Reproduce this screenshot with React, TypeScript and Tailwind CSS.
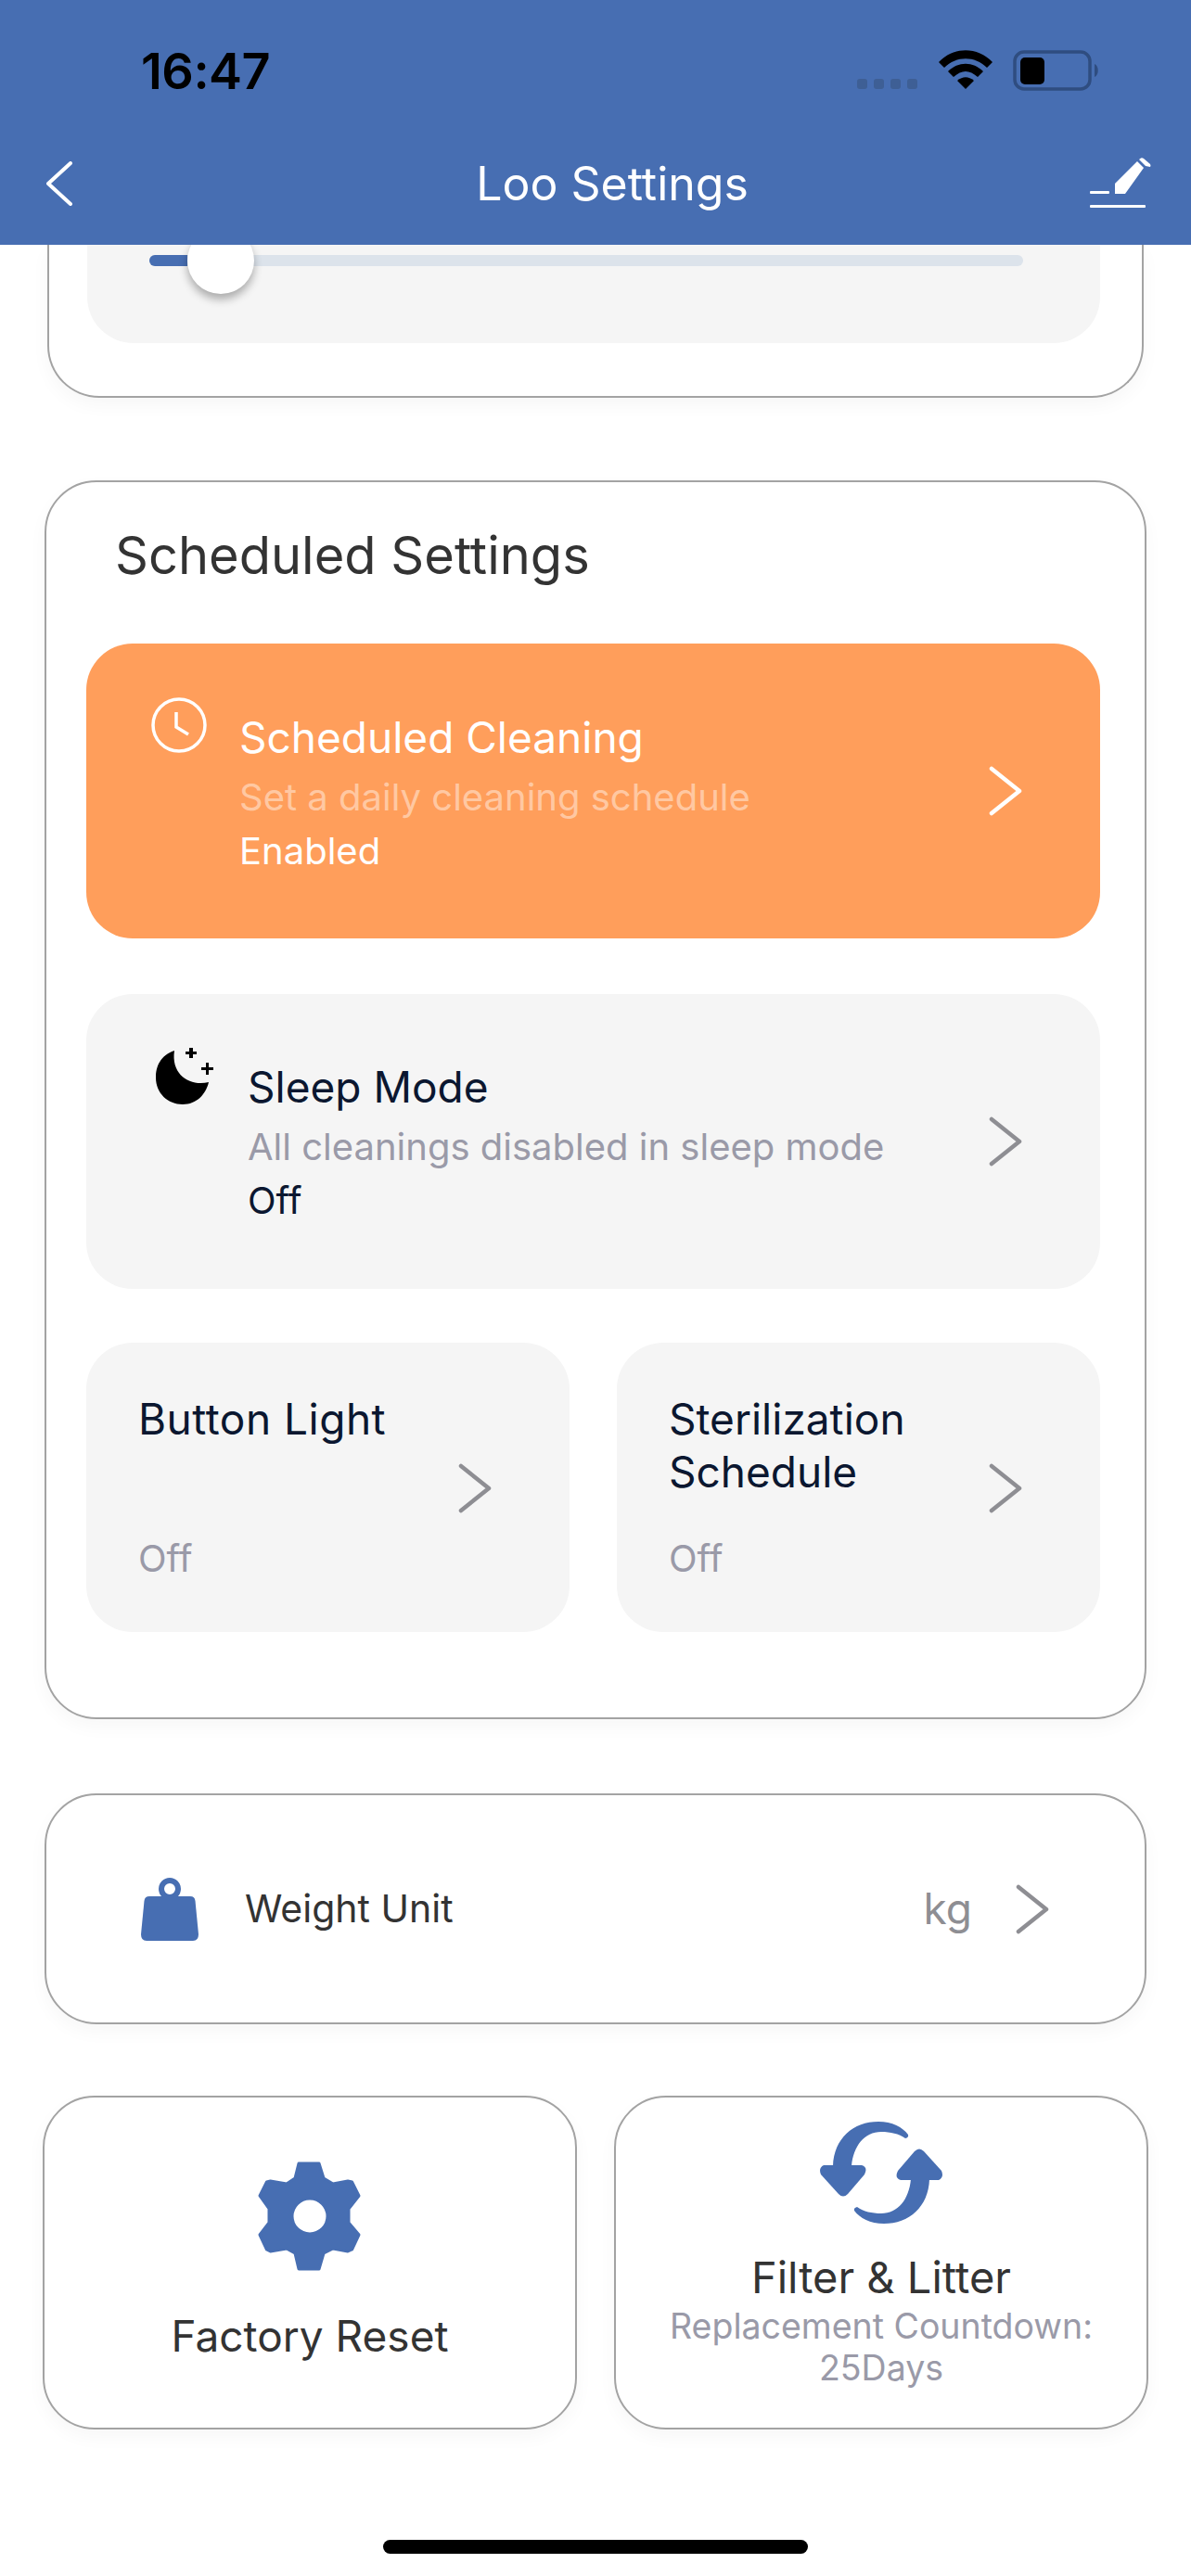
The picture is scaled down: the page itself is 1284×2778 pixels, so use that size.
const Chevron = ({ className }: { className: string }) => (
  <svg viewBox="0 0 36 54" className={className} fill="none" stroke="currentColor" strokeWidth="4.5" strokeLinecap="round" strokeLinejoin="round">
    <path d="M3 3 L33 27 L3 51" />
  </svg>
);

const Wifi = () => (
  <svg viewBox="0 0 58 42" className="w-[58px] h-[42px]" fill="#000">
    <path d="M0 13 C16 -4 42 -4 58 13 L52 19 C39 6 19 6 6 19 Z" />
    <path d="M10 23 C21 12 37 12 48 23 L42 29 C33 21 25 21 16 29 Z" />
    <path d="M20 33 C26 28 32 28 38 33 L29 42 Z" />
  </svg>
);

const Battery = () => (
  <svg viewBox="0 0 94 44" className="w-[94px] h-[44px]">
    <rect x="2" y="2" width="81" height="40" rx="10" fill="none" stroke="#2f4d80" strokeWidth="3.5" />
    <rect x="8" y="8" width="26" height="29" rx="5" fill="#000" />
    <path d="M88 15 C93 17 93 27 88 29 Z" fill="#2f4d80" />
  </svg>
);

const Pencil = () => (
  <svg viewBox="0 0 66 54" className="w-[66px] h-[54px]" fill="#fff">
    <rect x="0" y="36" width="21" height="3" rx="1" />
    <rect x="0" y="51" width="60" height="3" rx="1" />
    <path d="M27 39 L27 28 L51 4 L58 11 L38 39 Z" />
    <path d="M53 2 L55 0.5 Q56.5 0 58 1 L65 7 Q66 9 65 10 L60 9 Z" />
  </svg>
);

const Clock = () => (
  <svg viewBox="0 0 60 60" className="w-[60px] h-[60px]" fill="none" stroke="#fff" strokeWidth="3.5">
    <ellipse cx="30" cy="30" rx="28" ry="28" />
    <path d="M27 16 V32 L40 40" />
  </svg>
);

const Moon = () => (
  <svg viewBox="0 0 62 62" className="w-[62px] h-[62px]" fill="#000">
    <path d="M20 3 C5 8 0 20 0 32 C0 49 13 61 29 61 C44 61 54 50 57 37 C38 42 16 30 20 3 Z" />
    <path d="M36 0 h4 v4 h4 v3 h-4 v4 h-4 v-4 h-4 v-3 h4 Z" />
    <path d="M54 16 h3 v5 h5 v3 h-5 v5 h-3 v-5 h-5 v-3 h5 Z" />
  </svg>
);

const Weight = () => (
  <svg viewBox="0 0 62 68" className="w-[62px] h-[68px]" fill="#476eb2" fillRule="evenodd">
    <path d="M31 0 A12 12 0 0 1 43 12 A12 12 0 0 1 31 24 A12 12 0 0 1 19 12 A12 12 0 0 1 31 0 Z M31 6 A6 6 0 0 0 25 12 A6 6 0 0 0 31 18 A6 6 0 0 0 37 12 A6 6 0 0 0 31 6 Z" />
    <path d="M9 20 H53 Q58 20 58.5 25 L62 61 Q62 68 56 68 H6 Q0 68 0 61 L3.5 25 Q4 20 9 20 Z" />
  </svg>
);

const Gear = () => (
  <svg viewBox="-2 -2 112 120" className="w-[112px] h-[120px]" fill="#476eb2" stroke="#476eb2" strokeWidth="3" strokeLinejoin="round" fillRule="evenodd">
    <path d="M38 17 L42 1 H64 L69 17 L79 23 L95 20 L99.5 21 L107 36 L96 50 V65 L107 78 L99.5 94 L95 96 L79 93 L69 98 L64 115 H42 L38 98 L29 93 L11.5 96 L7.5 94 L0 78 L10 65 V50 L0 36 L7.5 21 L11.5 20 L29 23 Z M54 39 A19 19 0 0 0 35 58 A19 19 0 0 0 54 77 A19 19 0 0 0 73 58 A19 19 0 0 0 54 39 Z" />
  </svg>
);

const Refresh = () => (
  <svg viewBox="0 0 132 110" className="w-[132px] h-[110px]" fill="#476eb2">
    <path d="M14 48 C15 18 36 0 63 0 C78 0 89 6 95 14 Q96 17 92 18 C85 13 76 11 66 11 C48 11 36 26 34 48 Z" />
    <path d="M4 47 H45 Q52 49 48 57 L30 78 Q25 83 20 78 L1 57 Q-2 50 4 47 Z" />
    <path d="M118 62 C117 92 96 110 69 110 C54 110 43 104 37 96 Q36 93 40 92 C47 97 56 99 66 99 C84 99 96 84 98 62 Z" />
    <path d="M128 63 H87 Q80 61 84 53 L102 32 Q107 27 112 32 L131 53 Q134 60 128 63 Z" />
  </svg>
);

export default function App() {
  return (
    <div className="w-[1284px] h-[2778px] overflow-hidden bg-white font-['Inter',sans-serif]">
      <header className="relative z-10 h-[264px] bg-[#476eb2]">
        <div className="flex items-start justify-between pt-[54px] pl-[152px] pr-[98px] h-[150px]">
          <span className="mt-[2px] text-[54px] leading-[42px] font-semibold text-black tracking-[-0.5px]">16:47</span>
          <div className="flex items-start">
            <div className="flex gap-[7px] mt-[31px] mr-[23px]">
              <span className="w-[11px] h-[11px] rounded-[3px] bg-[#3e5f95]" />
              <span className="w-[11px] h-[11px] rounded-[3px] bg-[#3e5f95]" />
              <span className="w-[11px] h-[11px] rounded-[3px] bg-[#3e5f95]" />
              <span className="w-[11px] h-[11px] rounded-[3px] bg-[#3e5f95]" />
            </div>
            <Wifi />
            <div className="ml-[22px]">
              <Battery />
            </div>
          </div>
        </div>
        <div className="relative flex items-center justify-between pl-[50px] pr-[43px] h-[96px]">
          <svg viewBox="0 0 28 48" className="w-[28px] h-[48px]" fill="none" stroke="#fff" strokeWidth="4" strokeLinecap="round" strokeLinejoin="round">
            <path d="M26 2 L2 24 L26 46" />
          </svg>
          <span className="absolute left-[36px] right-0 text-center text-[50px] leading-[60px] text-white">Loo Settings</span>
          <div className="mt-[-2px]">
            <Pencil />
          </div>
        </div>
      </header>

      <main className="flex flex-col">
        <section className="mx-[51px] h-[165px] border-x-2 border-b-2 border-[#a3a3a3] rounded-b-[56px] pl-[41px] pr-[45px] shadow-[0_8px_20px_rgba(0,0,0,0.035)]">
          <div className="h-[106px] bg-[#f5f5f5] rounded-b-[50px] pt-[11px] pl-[67px] pr-[83px]">
            <div className="relative h-[12px] rounded-full bg-[#dce3eb]">
              <div className="h-full w-[41px] rounded-l-full bg-[#476eb2]" />
              <div className="absolute left-[41px] top-[-30px] w-[72px] h-[72px] rounded-full bg-white shadow-[0_6px_10px_rgba(0,0,0,0.3)]" />
            </div>
          </div>
        </section>

        <section className="mt-[89px] mx-[48px] h-[1336px] border-2 border-[#a3a3a3] rounded-[56px] pl-[43px] pr-[48px] shadow-[0_8px_20px_rgba(0,0,0,0.035)]">
          <h2 className="pt-[46px] pl-[31px] text-[56px] leading-[66px] font-normal text-[#333]">Scheduled Settings</h2>

          <div className="mt-[62px] h-[318px] rounded-[50px] bg-[#ff9e5b] flex items-center pl-[70px] pr-[84px]">
            <div className="self-start mt-[58px] w-[95px] shrink-0">
              <Clock />
            </div>
            <div className="flex-1 pt-[6px]">
              <p className="mb-[7px] text-[46px] leading-[58px] text-white">Scheduled Cleaning</p>
              <p className="text-[40px] leading-[58px] text-white/45">Set a daily cleaning schedule</p>
              <p className="text-[40px] leading-[58px] text-white">Enabled</p>
            </div>
            <Chevron className="w-[36px] h-[54px] text-white" />
          </div>

          <div className="mt-[60px] h-[318px] rounded-[50px] bg-[#f5f5f5] flex items-center pl-[75px] pr-[84px]">
            <div className="self-start mt-[58px] w-[99px] shrink-0">
              <Moon />
            </div>
            <div className="flex-1 pt-[4px]">
              <p className="mb-[7px] text-[46px] leading-[58px] text-[#0b1730]">Sleep Mode</p>
              <p className="text-[40px] leading-[58px] text-[#9a9aa8]">All cleanings disabled in sleep mode</p>
              <p className="text-[40px] leading-[58px] text-[#0b1730]">Off</p>
            </div>
            <Chevron className="w-[36px] h-[54px] text-[#8e8e93]" />
          </div>

          <div className="mt-[58px] grid grid-cols-2 gap-[51px]">
            <div className="relative h-[312px] rounded-[50px] bg-[#f5f5f5] pt-[54px] pl-[56px]">
              <p className="text-[46px] leading-[57px] tracking-[0.5px] text-[#0b1730]">Button Light</p>
              <p className="absolute left-[56px] bottom-[50px] text-[40px] leading-[58px] text-[#9a9aa8]">Off</p>
              <Chevron className="absolute right-[84px] top-[130px] w-[36px] h-[54px] text-[#8e8e93]" />
            </div>
            <div className="relative h-[312px] rounded-[50px] bg-[#f5f5f5] pt-[54px] pl-[56px]">
              <p className="text-[46px] leading-[57px] text-[#0b1730]">Sterilization<br />Schedule</p>
              <p className="absolute left-[56px] bottom-[50px] text-[40px] leading-[58px] text-[#9a9aa8]">Off</p>
              <Chevron className="absolute right-[84px] top-[130px] w-[36px] h-[54px] text-[#8e8e93]" />
            </div>
          </div>
        </section>

        <section className="mt-[80px] mx-[48px] h-[249px] border-2 border-[#a3a3a3] rounded-[56px] flex items-center pl-[102px] pr-[103px] shadow-[0_8px_20px_rgba(0,0,0,0.035)]">
          <Weight />
          <span className="ml-[50px] flex-1 text-[41px] text-[#333]">Weight Unit</span>
          <span className="text-[46px] text-[#8e8e93]">kg</span>
          <Chevron className="ml-[47px] w-[36px] h-[54px] text-[#8e8e93]" />
        </section>

        <section className="mt-[77px] mx-[46px] grid grid-cols-2 gap-[40px]">
          <div className="h-[360px] border-2 border-[#a3a3a3] rounded-[56px] flex flex-col items-center pt-[68px] shadow-[0_8px_20px_rgba(0,0,0,0.035)]">
            <Gear />
            <p className="mt-[40px] text-[46px] leading-[58px] text-[#333]">Factory Reset</p>
          </div>
          <div className="h-[360px] border-2 border-[#a3a3a3] rounded-[56px] flex flex-col items-center pt-[26px] shadow-[0_8px_20px_rgba(0,0,0,0.035)]">
            <Refresh />
            <p className="mt-[29px] text-[47px] leading-[58px] text-[#333]">Filter &amp; Litter</p>
            <p className="mt-[1px] text-center text-[37.5px] leading-[45px] text-[#9a9aa8]">Replacement Countdown:<br />25Days</p>
          </div>
        </section>

        <div className="mt-[119px] mx-auto w-[458px] h-[15px] rounded-full bg-black" />
      </main>
    </div>
  );
}
